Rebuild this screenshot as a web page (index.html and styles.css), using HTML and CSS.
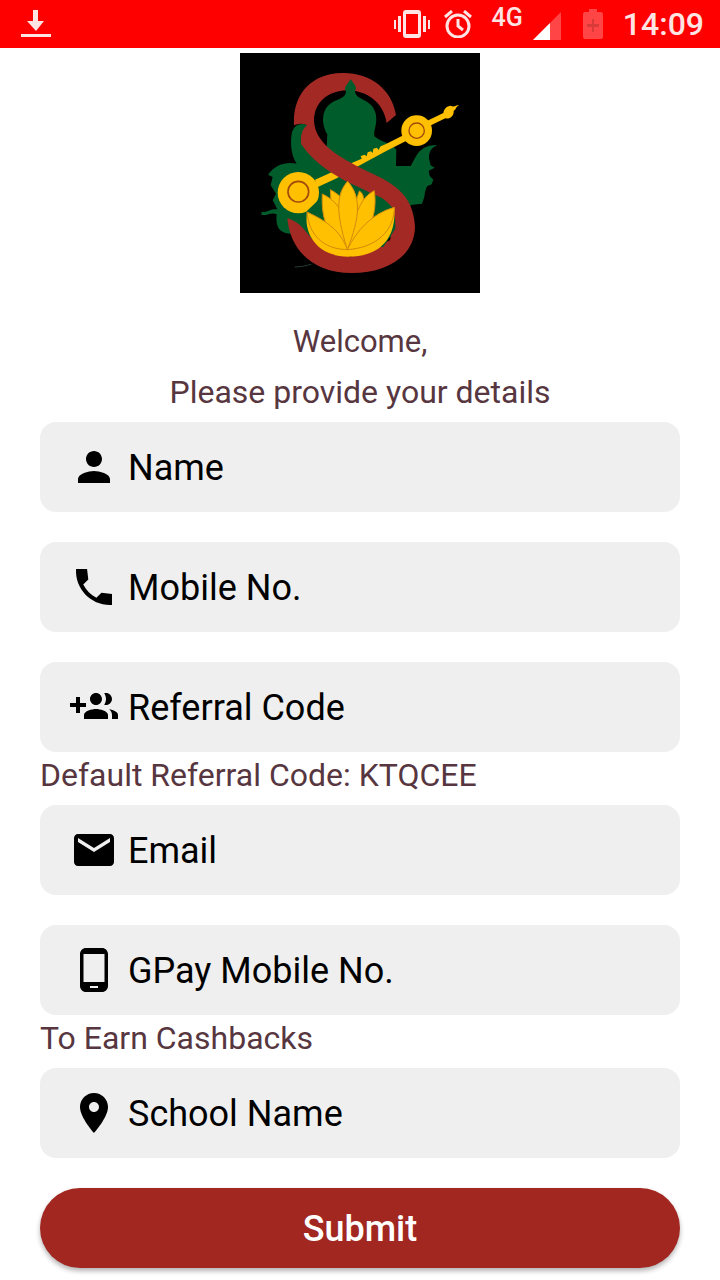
FILE: index.html
```html
<!DOCTYPE html>
<html lang="en">
<head>
  <meta charset="UTF-8">
  <meta name="viewport" content="width=device-width, initial-scale=1.0">
  <title>Your details</title>
  <link rel="stylesheet" href="styles.css">
</head>
<body>
  <header class="status-bar">
    <svg class="download" viewBox="0 0 32 28" width="32" height="28">
      <path d="M13 0h5v11h6l-8 10-9-10h6zM1 24h30v3H1z"/>
    </svg>
    <div class="status-right">
      <svg class="vibrate" viewBox="0 0 36 28" width="36" height="28">
        <path d="M0 10h2v9H0zM4 6h3v16H4zM29 6h3v16h-3zM34 10h2v9h-2z"/>
        <path fill-rule="evenodd" d="M12 0h12q3 0 3 3v22q0 3-3 3H12q-3 0-3-3V3q0-3 3-3zm0 4v20h12V4z"/>
      </svg>
      <svg class="alarm" viewBox="0 0 28 28" width="28" height="28">
        <g fill="none" stroke="#ffe4e4" stroke-width="3">
          <circle cx="14" cy="16" r="11"/>
          <path d="M1 7l7-6M27 7l-7-6M14 9v7l5 4"/>
        </g>
      </svg>
      <span class="network">4G</span>
      <svg class="signal" viewBox="0 0 28 28" width="28" height="28">
        <path opacity=".3" d="M28 0v28H0z"/>
        <path fill="#fff" d="M17 11v17H0z"/>
      </svg>
      <svg class="battery" viewBox="0 0 20 30" width="20" height="30">
        <path opacity=".3" d="M6 0h8v3h4q2 0 2 2v23q0 2-2 2H2q-2 0-2-2V5q0-2 2-2h4z"/>
        <path fill="#d93a3a" d="M9 10h2v5h5v3h-5v5H9v-5H4v-3h5z"/>
      </svg>
      <span class="clock">14:09</span>
    </div>
  </header>

  <main class="page">
    <svg class="logo" viewBox="0 8 720 720" role="img" aria-label="Logo">
      <rect y="8" width="720" height="720" fill="#000"/>
      <!-- seated figure -->
      <path fill="#005c2b" d="M332 86C340 100 354 110 345 122C344 150 402 145 408 195C412 225 400 240 403 258C425 275 455 280 469 298L468 347L512 347C525 325 532 305 545 298C560 286 575 284 592 284C575 292 566 302 567 325L572 345L584 352L566 361L569 376L580 388L575 402L561 408L555 425L553 440L546 460L512 464L480 560L200 570L150 550C120 550 105 530 110 492C95 484 85 496 65 494L64 485C82 487 90 474 112 477L98 450L108 430L92 405L98 380L84 373C105 342 140 333 170 340C150 310 152 270 155 250C160 225 180 218 198 223L200 285L260 290L262 252C240 215 245 165 290 150C310 142 318 135 318 122C308 112 325 100 332 86Z"/>
      <!-- veena -->
      <path fill="#fec000" d="M225 388L270 368L330 340L365 325L362 317L374 313L380 318L383 306L393 303L398 308L400 295L411 292L415 299L422 288L438 281L490 255L498 272L440 301L350 350L290 384L232 411Z"/>
      <path fill="#fec000" d="M562 211L610 188C612 175 620 167 632 166C642 172 647 164 658 164C647 169 651 174 641 182C642 199 628 207 616 204L570 226Z"/>
      <circle cx="175" cy="427" r="62" fill="#fec000"/>
      <circle cx="175" cy="424" r="31" fill="none" stroke="#a34a0b" stroke-width="5"/>
      <circle cx="530" cy="241" r="46" fill="#fec000"/>
      <circle cx="530" cy="241" r="23" fill="none" stroke="#a34a0b" stroke-width="4"/>
      <!-- letter ribbon -->
      <path fill="#a32a24" d="M440 218L468 194C455 115 390 66 305 68C215 70 157 130 162 225Q178 217 198 223C184 237 180 256 184 282C215 328 255 358 315 391C370 418 430 440 458 472L464 510L450 570L330 620L215 565L188 532Q170 513 142 503C150 600 220 668 335 668C445 668 525 615 525 528C520 435 465 400 385 364C285 316 225 275 222 212C222 155 265 122 320 120C380 120 430 155 440 218Z"/>
      <path fill="#005c2b" d="M157 250C160 225 180 216 202 225C188 235 180 250 183 285L165 290Z"/>
      <path fill="#005c2b" d="M332 86C340 100 354 110 345 122L346 140H317L318 122C308 112 325 100 332 86Z"/>
      <!-- lotus -->
      <path fill="#005c2b" d="M200 483L250 435L290 396L340 410L400 432C440 446 470 470 466 535L430 590L240 580Z"/>
      <g fill="#fec000" stroke="#d38b0c" stroke-width="3">
        <path stroke="none" d="M201 485C190 555 235 619 325 619C415 619 470 570 463 471C445 520 400 590 322 598C270 580 210 540 201 485Z"/>
        <path d="M271 418C290 428 305 440 312 455L310 510L275 490Z"/>
        <path d="M358 422C368 428 371 438 371 450L350 500L345 460Z"/>
        <path d="M247 431C285 450 325 480 322 598C260 560 243 500 247 431Z"/>
        <path d="M403 421C365 440 345 480 322 598C390 560 413 490 403 421Z"/>
        <path d="M323 393C290 430 285 480 322 598C360 500 365 440 323 393Z"/>
        <path d="M201 485C250 508 300 535 322 598C250 596 207 555 201 485Z"/>
        <path d="M463 471C395 490 350 540 322 598C410 592 463 540 463 471Z"/>
      </g>
      <path fill="none" stroke="#36584a" stroke-width="2" d="M164 650L188 648L214 642"/>
    </svg>

    <h1 class="welcome">Welcome,</h1>
    <p class="intro">Please provide your details</p>

    <form class="details">
      <label class="field">
        <svg viewBox="0 0 24 24"><path d="M12 12c2.21 0 4-1.79 4-4s-1.79-4-4-4-4 1.79-4 4 1.79 4 4 4zm0 2c-2.67 0-8 1.34-8 4v2h16v-2c0-2.66-5.33-4-8-4z"/></svg>
        <input type="text" name="name" placeholder="Name" aria-label="Name">
      </label>
      <label class="field">
        <svg viewBox="0 0 24 24"><path d="M21 15.46l-5.27-.61-2.52 2.52c-2.83-1.44-5.15-3.75-6.59-6.59l2.53-2.53L8.54 3H3.03C2.45 13.18 10.82 21.55 21 20.97v-5.51z"/></svg>
        <input type="tel" name="mobile" placeholder="Mobile No." aria-label="Mobile No.">
      </label>
      <div class="group">
        <label class="field">
          <svg viewBox="0 0 24 24"><path d="M8 10H5V7H3v3H0v2h3v3h2v-3h3v-2zm10 1c1.66 0 2.99-1.34 2.99-3S19.66 5 18 5c-.32 0-.63.05-.91.14.57.81.9 1.79.9 2.86s-.34 2.04-.9 2.86c.28.09.59.14.91.14zm-5 0c1.66 0 2.99-1.34 2.99-3S14.66 5 13 5c-1.66 0-3 1.34-3 3s1.34 3 3 3zm6.62 2.16c.83.73 1.38 1.66 1.38 2.84v2h3v-2c0-1.54-2.37-2.49-4.38-2.84zM13 13c-2 0-6 1-6 3v2h12v-2c0-2-4-3-6-3z"/></svg>
          <input type="text" name="referral" placeholder="Referral Code" aria-label="Referral Code">
        </label>
        <p class="hint">Default Referral Code: KTQCEE</p>
        <label class="field">
          <svg viewBox="0 0 24 24"><path d="M20 4H4c-1.1 0-1.99.9-1.99 2L2 18c0 1.1.9 2 2 2h16c1.1 0 2-.9 2-2V6c0-1.1-.9-2-2-2zm0 4l-8 5-8-5V6l8 5 8-5v2z"/></svg>
          <input type="email" name="email" placeholder="Email" aria-label="Email">
        </label>
      </div>
      <div class="group">
        <label class="field">
          <svg viewBox="0 0 24 24"><path d="M16 1H8C6.34 1 5 2.34 5 4v16c0 1.66 1.34 3 3 3h8c1.66 0 3-1.34 3-3V4c0-1.66-1.34-3-3-3zm-2 20h-4v-1h4v1zm3.25-3H6.75V4h10.5v14z"/></svg>
          <input type="tel" name="gpay" placeholder="GPay Mobile No." aria-label="GPay Mobile No.">
        </label>
        <p class="hint">To Earn Cashbacks</p>
        <label class="field">
          <svg viewBox="0 0 24 24"><path d="M12 2C8.13 2 5 5.13 5 9c0 5.25 7 13 7 13s7-7.75 7-13c0-3.87-3.13-7-7-7zm0 9.5c-1.38 0-2.5-1.12-2.5-2.5s1.12-2.5 2.5-2.5 2.5 1.12 2.5 2.5-1.12 2.5-2.5 2.5z"/></svg>
          <input type="text" name="school" placeholder="School Name" aria-label="School Name">
        </label>
      </div>
      <button type="submit" class="submit">Submit</button>
    </form>
  </main>
</body>
</html>
```
FILE: styles.css
```css
* {
  box-sizing: border-box;
}

body {
  margin: 0;
  background-color: #ffffff;
  color: #573640;
  font-family: Roboto, "Liberation Sans", sans-serif;
  font-size: 32px;
}

.status-bar {
  display: flex;
  justify-content: space-between;
  align-items: center;
  height: 48px;
  padding: 0 16px 0 20px;
  background-color: #ff0000;
  color: #ffe4e4;
  fill: #ffe4e4;
}

.status-right {
  display: flex;
  align-items: center;
  height: 100%;
}

.alarm {
  margin-left: 14px;
}

.network {
  align-self: flex-start;
  margin-left: 20px;
  font-size: 25px;
  font-weight: 500;
  line-height: 36px;
}

.signal {
  margin-left: 10px;
  margin-top: 4px;
}

.battery {
  margin-left: 22px;
}

.clock {
  margin-left: 20px;
  font-weight: 500;
  line-height: 50px;
}

.page {
  padding: 5px 40px 12px;
}

.logo {
  display: block;
  width: 240px;
  height: 240px;
  margin: 0 auto 24px;
}

.welcome,
.intro {
  margin: 0;
  font-size: 32px;
  font-weight: 400;
  line-height: 50px;
  text-align: center;
}

.welcome {
  font-size: 31px;
}

.details {
  display: flex;
  flex-direction: column;
  gap: 30px;
  margin-top: 5px;
}

.field {
  display: flex;
  align-items: center;
  gap: 10px;
  height: 90px;
  padding: 0 30px;
  border-radius: 16px;
  background-color: #efefef;
}

.field svg {
  flex: none;
  width: 48px;
  height: 48px;
}

.field input {
  flex: 1;
  min-width: 0;
  padding: 2px 0 0;
  border: 0;
  outline: 0;
  background: none;
  color: #000000;
  font-family: inherit;
  font-size: 36px;
  line-height: 48px;
}

.field input::placeholder {
  color: #000000;
  opacity: 1;
}

.hint {
  margin: 0 0 7px;
  line-height: 46px;
}

.submit {
  height: 80px;
  padding: 2px 0 0;
  border: 0;
  border-radius: 40px;
  background-color: #a12720;
  box-shadow: 0 3px 5px rgba(0, 0, 0, 0.3);
  color: #ffffff;
  font-family: inherit;
  font-size: 36px;
  font-weight: 500;
}
```
